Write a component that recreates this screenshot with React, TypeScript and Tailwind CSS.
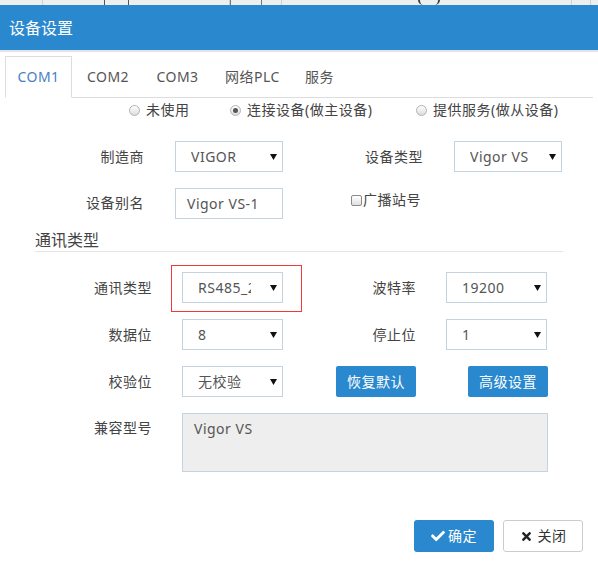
import React from "react";
import { FaCheck, FaTimes } from "react-icons/fa";

function Arrow() {
  return (
    <svg width="7" height="6" viewBox="0 0 7 6" className="absolute right-[5px] top-[12px]">
      <polygon points="0,0 7,0 3.5,6" fill="#111" />
    </svg>
  );
}

function Select({ value, w }: { value: string; w: string }) {
  return (
    <div
      className={`relative h-[31px] border border-[#c5d3e0] bg-white flex items-center pl-[15px] pr-[31px] text-[#555] text-[14px] leading-[20px] ${w}`}
    >
      <span className="overflow-hidden whitespace-nowrap">{value}</span>
      <Arrow />
    </div>
  );
}

function Radio({ checked }: { checked?: boolean }) {
  return (
    <span className="w-[11px] h-[11px] rounded-full border border-[#b3b3b3] bg-gradient-to-b from-white to-[#dcdcdc] flex items-center justify-center">
      {checked && <span className="w-[5px] h-[5px] rounded-full bg-[#555]" />}
    </span>
  );
}

export default function App() {
  const label = "text-right text-[#444] text-[14px] leading-[20px]";
  return (
    <div className="w-[598px] h-[565px] bg-white overflow-hidden font-['Noto_Sans','Noto_Sans_CJK_SC',sans-serif] text-[14px] tracking-[0.5px]">
      {/* background strip */}
      <div className="h-[5px] bg-[#eeeeee] flex">
        <div className="w-[43px] border-r border-[#cfcfcf]" />
        <div className="w-[61px]" />
        <div className="w-[25px] border-x border-[#555] border-t-0" />
        <div className="w-[101px] border-r border-[#cfcfcf]" />
        <div className="w-[32px] border-x border-[#777]" />
        <div className="w-[20px] border-r border-[#cfcfcf]" />
        <div className="w-[136px]" />
        <div className="w-[22px] border-x-2 border-[#444] rounded-b-full" />
        <div className="w-[132px] border-r border-[#cfcfcf]" />
        <div className="w-[19px] border-r border-[#cfcfcf]" />
      </div>
      {/* header */}
      <div className="h-[45px] bg-[#2a88cf] flex items-center pl-[9px] text-white text-[16px] leading-[22px] tracking-normal">
        设备设置
      </div>
      <div className="h-[2px] bg-[#e4e4e4]" />

      {/* tabs */}
      <div className="px-[5px] pt-[4px]">
        <div className="flex h-[42px] border-b border-[#dddddd] text-[14px] leading-[20px]">
          <div className="w-[67px] mr-[2px] h-[42px] border border-[#dddddd] border-b-white bg-white flex items-center justify-center text-[#4a7fbf]">
            COM1
          </div>
          <div className="w-[68px] mr-[2px] flex items-center justify-center text-[#555]">COM2</div>
          <div className="w-[67px] mr-[2px] flex items-center justify-center text-[#555]">COM3</div>
          <div className="w-[79px] mr-[2px] flex items-center justify-center text-[#555]">网络PLC</div>
          <div className="w-[51px] flex items-center justify-center text-[#555]">服务</div>
        </div>
      </div>

      {/* radios */}
      <div className="mt-[2px] h-[20px] flex items-center pl-[129px] text-[#444] leading-[20px]">
        <div className="w-[101px] flex items-center gap-[6px]">
          <Radio />
          <span>未使用</span>
        </div>
        <div className="w-[186px] flex items-center gap-[6px]">
          <Radio checked />
          <span>连接设备(做主设备)</span>
        </div>
        <div className="flex items-center gap-[6px]">
          <Radio />
          <span>提供服务(做从设备)</span>
        </div>
      </div>

      {/* row 1 */}
      <div className="mt-[21px] h-[31px] flex items-center">
        <div className={`w-[144px] ${label}`}>制造商</div>
        <div className="ml-[31px]">
          <Select value="VIGOR" w="w-[108px]" />
        </div>
        <div className={`w-[140px] ${label}`}>设备类型</div>
        <div className="ml-[31px]">
          <Select value="Vigor VS" w="w-[108px]" />
        </div>
      </div>

      {/* row 2 */}
      <div className="mt-[16px] h-[31px] flex items-start">
        <div className={`w-[144px] mt-[5px] ${label}`}>设备别名</div>
        <div className="ml-[31px] w-[108px] h-[31px] border border-[#c5d3e0] flex items-center pl-[11px] text-[#555] leading-[20px]">
          Vigor VS-1
        </div>
        <div className="ml-[68px] mt-[2px] flex items-center h-[20px] text-[#444] leading-[20px]">
          <span className="w-[11px] h-[11px] border border-[#8a8a8a] rounded-[2px] bg-gradient-to-b from-white to-[#e0e0e0] mr-[1px]" />
          <span>广播站号</span>
        </div>
      </div>

      {/* section header */}
      <div className="mt-[11px] ml-[35px] w-[528px] h-[22px] border-b border-[#e5e5e5] text-[#444] text-[16px] leading-[20px] tracking-normal">
        通讯类型
      </div>

      {/* row 3 */}
      <div className="mt-[20px] h-[31px] flex items-center">
        <div className={`w-[152px] ${label}`}>通讯类型</div>
        <div className="relative ml-[30px]">
          <Select value="RS485_2" w="w-[101px]" />
          <svg
            width="131"
            height="47"
            viewBox="0 0 131 47"
            className="absolute left-[-11px] top-[-7px] pointer-events-none"
          >
            <rect x="0.5" y="0.5" width="130" height="46" fill="none" stroke="#ee3a3a" strokeWidth="1" />
          </svg>
        </div>
        <div className={`w-[133px] ${label}`}>波特率</div>
        <div className="ml-[30px]">
          <Select value="19200" w="w-[101px]" />
        </div>
      </div>

      {/* row 4 */}
      <div className="mt-[16px] h-[31px] flex items-center">
        <div className={`w-[152px] ${label}`}>数据位</div>
        <div className="ml-[30px]">
          <Select value="8" w="w-[101px]" />
        </div>
        <div className={`w-[133px] ${label}`}>停止位</div>
        <div className="ml-[30px]">
          <Select value="1" w="w-[101px]" />
        </div>
      </div>

      {/* row 5 */}
      <div className="mt-[16px] h-[31px] flex items-center">
        <div className={`w-[152px] ${label}`}>校验位</div>
        <div className="ml-[30px]">
          <Select value="无校验" w="w-[101px]" />
        </div>
        <div className="ml-[53px] w-[80px] h-[31px] rounded-[2px] bg-[#2a88cf] text-white flex items-center justify-center leading-[20px]">
          恢复默认
        </div>
        <div className="ml-[52px] w-[80px] h-[31px] rounded-[2px] bg-[#2a88cf] text-white flex items-center justify-center leading-[20px]">
          高级设置
        </div>
      </div>

      {/* row 6 */}
      <div className="mt-[16px] flex items-start">
        <div className={`w-[152px] mt-[5px] ${label}`}>兼容型号</div>
        <div className="ml-[30px] w-[366px] h-[59px] border border-[#c5d3e0] bg-[#eeeeee] pl-[11px] pt-[5px] text-[#555] leading-[20px]">
          Vigor VS
        </div>
      </div>

      {/* footer */}
      <div className="mt-[48px] pl-[414px] flex gap-[9px]">
        <div className="w-[80px] h-[32px] rounded-[3px] bg-[#2a88cf] text-white flex items-center justify-center gap-[3px] leading-[20px]">
          <FaCheck size={14} />
          <span>确定</span>
        </div>
        <div className="w-[80px] h-[32px] rounded-[3px] border border-[#cccccc] bg-white text-[#333] flex items-center justify-center gap-[5px] leading-[20px]">
          <FaTimes size={13} className="text-[#222]" />
          <span>关闭</span>
        </div>
      </div>
    </div>
  );
}
